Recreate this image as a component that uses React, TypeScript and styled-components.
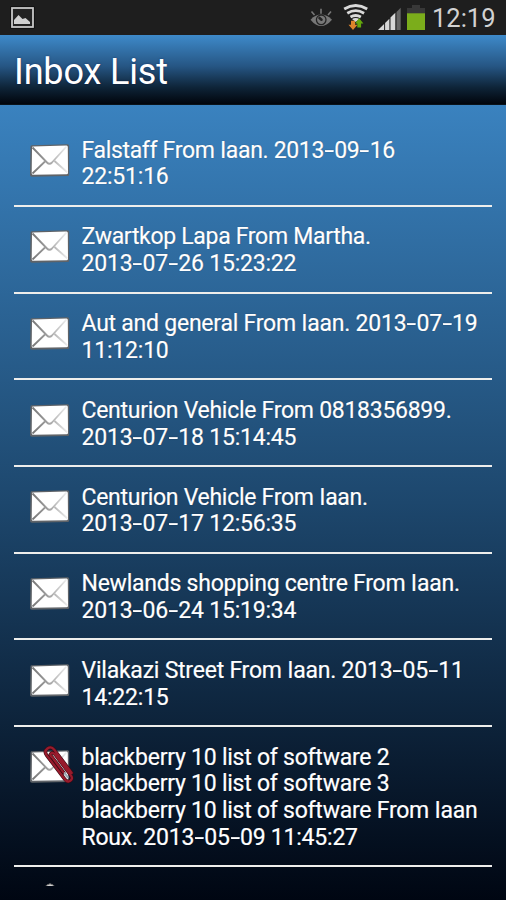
import React, { Fragment } from "react";
import styled, { createGlobalStyle } from "styled-components";

const GlobalStyle = createGlobalStyle`
  * { box-sizing: border-box; }
  html, body { margin: 0; background: #000510; }
`;

const Screen = styled.div`
  display: flex;
  flex-direction: column;
  width: 506px;
  height: 900px;
  overflow: hidden;
  font-family: Roboto, "Liberation Sans", sans-serif;
  color: #fff;
`;

const StatusBar = styled.div`
  display: flex;
  flex: none;
  align-items: flex-start;
  justify-content: space-between;
  height: 35px;
  background: #1e1e1e;
`;

const StatusIcons = styled.div`
  display: flex;
`;

const Clock = styled.span`
  width: 75px;
  padding-left: 1px;
  font-size: 25.5px;
  line-height: 36px;
  color: #d2d2d2;
  white-space: nowrap;
`;

const Header = styled.header`
  flex: none;
  height: 70px;
  padding-left: 14px;
  border-bottom: 1px solid #0a1219;
  background: linear-gradient(#3e8aca, #265684 45%, #0e2438 76%, #01050c);
`;

const Title = styled.h1`
  margin: 0;
  font-size: 36px;
  font-weight: 400;
  line-height: 75px;
  letter-spacing: -0.15px;
  text-shadow: 0 0 2px rgba(0, 0, 60, 0.5);
`;

const Body = styled.main`
  flex: 1;
  min-height: 0;
  padding: 15.2px 14px 14px;
  background: linear-gradient(#3a82bf, #1d476d 50%, #000612);
`;

const List = styled.ul`
  height: 100%;
  margin: 0;
  padding: 0;
  overflow: hidden;
  list-style: none;
`;

const Row = styled.li<{ $lines: number }>`
  display: flex;
  height: ${(p) => 33.35 + p.$lines * 26.67}px;
  padding: 16.6px 0 0 14px;
  border-bottom: 2px solid #eeeeec;
`;

const IconSlot = styled.div`
  width: 48px;
  height: 48px;
  padding-top: 0.8px;
`;

const Message = styled.div`
  margin-left: 5.5px;
`;

const Line = styled.div<{ $spacing: number }>`
  height: 26.67px;
  font-size: 23px;
  line-height: 27px;
  letter-spacing: ${(p) => p.$spacing}px;
  white-space: nowrap;
  text-shadow: 0 0 1px rgba(0, 0, 30, 0.5);
  -webkit-text-stroke: 0.2px #fff;
`;

const Dash = styled.span`
  display: inline-block;
  width: 10.2px;
  text-align: center;
  transform: scaleX(1.5);
`;

const Icon = styled.svg`
  display: block;
  flex: none;
  overflow: visible;
`;

const PictureIcon = () => (
  <Icon width="36" height="35" viewBox="0 0 36 35">
    <rect x="10.500" y="6.500" width="24" height="22" fill="#050505" />
    <rect x="12" y="8" width="21" height="19" fill="#222" stroke="#c8c8c8" strokeWidth="1.800" />
    <path d="M14 24V20l4.500-5 4 4 3-1 4.500 4v2Z" fill="#d0d0d0" />
  </Icon>
);

const EyeIcon = () => (
  <Icon width="44" height="35" viewBox="299.500 0 44 35">
    <path d="M311 19.700Q321.500 9.500 332.500 19.700Q321.500 32.500 311 19.700Z" fill="#777" />
    <circle cx="321.700" cy="19.800" r="4.800" fill="#777" stroke="#242424" strokeWidth="1.300" />
    <path d="m320 18 2 1.700" stroke="#242424" strokeWidth="2.600" strokeLinecap="round" />
    <path d="M321.500 8.700v5M312 11.500l3 3.500M331.500 11.500l-3 3.500" stroke="#777" strokeWidth="1.600" />
  </Icon>
);

const WifiIcon = () => (
  <Icon width="34" height="35" viewBox="343.500 0 34 35">
    <g fill="none" stroke="#dadada" strokeWidth="2.800">
      <path d="M344.700 9q11.500-7 23 0" />
      <path d="M347.800 13.200q8.400-5 16.800 0" />
      <path d="M351 17q5.200-3 10.400 0" />
    </g>
    <path d="m352.500 19q3.700-2 7.400 0l-3.700 3Z" fill="#dadada" />
    <path d="M351.500 20.800h4v4h2.500l-4.500 5.200-4.500-5.200h2.500Z" fill="#dd842b" />
    <path d="M357.800 27.500v-4h-2.300l4.200-5.200 4.200 5.200h-2.300v4Z" fill="#64a80c" />
  </Icon>
);

const SignalIcon = () => (
  <Icon width="28" height="35" viewBox="376.500 0 28 35">
    <path d="M377.500 30l6.100-6v6Z" fill="#d8d8d8" />
    <path d="M384.600 30v-7l4.300-4.300V30Z" fill="#d8d8d8" />
    <path d="M390 30V17.400l4.800-4.600V30Z" fill="#d8d8d8" />
    <path d="M396 30V12l4.200-4.300V30Z" fill="#666" />
  </Icon>
);

const BatteryIcon = () => (
  <Icon width="26" height="35" viewBox="405 0 26 35">
    <path d="M407 30V8h5V5h8v3h5v22Z" fill="#383838" />
    <path d="M407 13.300h18V30h-18Z" fill="#7bad1b" />
  </Icon>
);

const Clip = () => (
  <g transform="translate(31.500 20.500) rotate(53)" fill="none" strokeLinecap="round">
    <path
      d="M14-4.700H-15Q-20-4.700-20 0T-15 4.700H15Q19.500 4.700 19.500 1T15-2.500H-10Q-14-2.500-14 0T-10 1.500H9"
      stroke="#3b0a14"
      strokeWidth="3.500"
    />
    <path
      d="M14-4.700H-15Q-20-4.700-20 0T-15 4.700H15Q19.500 4.700 19.500 1T15-2.500H-10Q-14-2.500-14 0T-10 1.500H9"
      stroke="#981b2c"
      strokeWidth="2.300"
    />
    <path d="M10 1h5" stroke="#9aa7b3" strokeWidth="2" />
  </g>
);

const MailIcon = ({ clipped, id }: { clipped?: boolean; id: number }) => (
  <Icon width="48" height="48" viewBox="0 0 48 48">
    <defs>
      <linearGradient id={`fold${id}`} x1="0" x2="1">
        <stop offset="0" stopColor="#777" />
        <stop offset=".55" stopColor="#aaa" />
        <stop offset="1" stopColor="#eee" />
      </linearGradient>
      <filter id={`soft${id}`} x="-15%" y="-15%" width="130%" height="140%">
        <feGaussianBlur stdDeviation=".7" />
      </filter>
    </defs>
    <path
      d="M2.500 8.500Q2.500 7.200 4 7.200L39.500 6.300Q41.200 6.300 41.200 8V36.500Q41.200 38 39.500 38L4 38.700Q2 38.700 2 37Z"
      fill="#5f6468"
      filter={`url(#soft${id})`}
    />
    <path
      d="M4 9.300Q4 8.500 5 8.500L38.500 7.500Q39.800 7.500 39.800 9L40 34.700Q40 36.200 38.500 36.200L5 36.700Q3.700 36.700 3.700 35.200Z"
      fill="#fff"
    />
    <g fill="none" stroke={`url(#fold${id})`} strokeWidth="1.800">
      <path d="M4.500 9.500 19 24.500q2.500 2.500 5 0L38.500 8.500" />
      <path d="M4.500 35.500 17 23.500M26.500 23 39.500 34.500" />
    </g>
    {clipped && <Clip />}
  </Icon>
);

const OpenMailIcon = () => (
  <Icon width="48" height="48" viewBox="0 0 48 48">
    <path d="M3 15 19 1Q22-1.500 25 1L41 15V36H3Z" fill="#d4d4d4" stroke="#666" />
    <path d="m3 15 19 13 19-13" fill="none" stroke="#999" strokeWidth="1.500" />
  </Icon>
);

type MailItem = {
  icon: "mail" | "clipped" | "open";
  lines: { text: string; spacing: number }[];
};

const line = (text: string, spacing: number) => ({ text, spacing });

const mails: MailItem[] = [
  { icon: "mail", lines: [line("Falstaff From Iaan. 2013-09-16", -0.33), line("22:51:16", -0.2)] },
  { icon: "mail", lines: [line("Zwartkop Lapa From Martha.", -0.31), line("2013-07-26 15:23:22", -0.2)] },
  { icon: "mail", lines: [line("Aut and general From Iaan. 2013-07-19", -0.24), line("11:12:10", -0.2)] },
  { icon: "mail", lines: [line("Centurion Vehicle From 0818356899.", -0.28), line("2013-07-18 15:14:45", -0.2)] },
  { icon: "mail", lines: [line("Centurion Vehicle From Iaan.", -0.28), line("2013-07-17 12:56:35", -0.2)] },
  { icon: "mail", lines: [line("Newlands shopping centre From Iaan.", -0.24), line("2013-06-24 15:19:34", -0.2)] },
  { icon: "mail", lines: [line("Vilakazi Street From Iaan. 2013-05-11", -0.23), line("14:22:15", -0.2)] },
  {
    icon: "clipped",
    lines: [
      line("blackberry 10 list of software 2", -0.24),
      line("blackberry 10 list of software 3", -0.24),
      line("blackberry 10 list of software From Iaan", -0.24),
      line("Roux. 2013-05-09 11:45:27", -0.22),
    ],
  },
  { icon: "open", lines: [] },
];

const DashedText = ({ text }: { text: string }) => (
  <>
    {text.split("-").map((part, i) => (
      <Fragment key={i}>
        {i > 0 && <Dash>-</Dash>}
        {part}
      </Fragment>
    ))}
  </>
);

export default function App() {
  return (
    <Screen>
      <GlobalStyle />
      <StatusBar>
        <PictureIcon />
        <StatusIcons>
          <EyeIcon />
          <WifiIcon />
          <SignalIcon />
          <BatteryIcon />
          <Clock>12:19</Clock>
        </StatusIcons>
      </StatusBar>
      <Header>
        <Title>Inbox List</Title>
      </Header>
      <Body>
        <List>
          {mails.map((mail, i) => (
            <Row key={i} $lines={mail.lines.length}>
              <IconSlot>
                {mail.icon === "open" ? (
                  <OpenMailIcon />
                ) : (
                  <MailIcon clipped={mail.icon === "clipped"} id={i} />
                )}
              </IconSlot>
              <Message>
                {mail.lines.map(({ text, spacing }) => (
                  <Line key={text} $spacing={spacing}>
                    <DashedText text={text} />
                  </Line>
                ))}
              </Message>
            </Row>
          ))}
        </List>
      </Body>
    </Screen>
  );
}
